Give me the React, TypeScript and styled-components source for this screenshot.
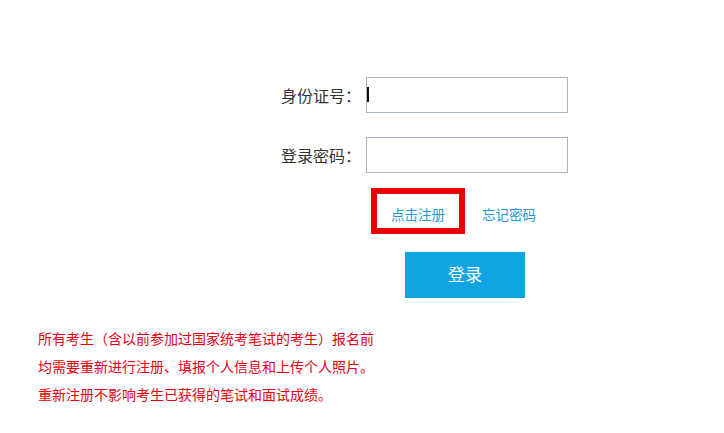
import React from 'react';
import styled, { createGlobalStyle } from 'styled-components';

const GlobalStyle = createGlobalStyle`
  html, body {
    margin: 0;
    padding: 0;
    background: #ffffff;
  }
  body {
    font-family: "Noto Sans CJK SC", "Noto Sans", "Liberation Sans", sans-serif;
  }
`;

const Page = styled.div`
  width: 724px;
  height: 433px;
  padding-top: 77px;
  box-sizing: border-box;
  overflow: hidden;
`;

const Form = styled.form`
  display: flex;
  flex-direction: column;
  margin-left: 260px;
`;

const FieldRow = styled.div<{ $gap: number }>`
  display: flex;
  align-items: center;
  margin-bottom: ${(p) => p.$gap}px;
`;

const Label = styled.label`
  width: 106px;
  box-sizing: border-box;
  padding-right: 5px;
  text-align: right;
  font-size: 16px;
  color: #333333;
  line-height: 20px;
  white-space: nowrap;
`;

const InputWrap = styled.span<{ $caret?: boolean }>`
  position: relative;
  display: inline-flex;

  &::after {
    content: '';
    display: ${(p) => (p.$caret ? 'block' : 'none')};
    position: absolute;
    left: 1px;
    top: 10px;
    width: 2px;
    height: 15px;
    background: #111;
  }
`;

const Input = styled.input`
  width: 202px;
  height: 36px;
  box-sizing: border-box;
  border: 1px solid #a9b6c4;
  padding: 0 0 0 3px;
  font-size: 14px;
  font-family: inherit;
  color: #333;
  caret-color: transparent;
  outline: none;
  background: #fff;
`;

const LinkRow = styled.div`
  display: flex;
  align-items: center;
  margin-left: 111px;
  height: 46px;
`;

const LinkBox = styled.div<{ $marked?: boolean }>`
  display: flex;
  align-items: center;
  justify-content: center;
  box-sizing: border-box;
  height: 46px;
  width: ${(p) => (p.$marked ? '94px' : 'auto')};
  border: ${(p) => (p.$marked ? '6px solid #ee0000' : 'none')};
  margin-right: ${(p) => (p.$marked ? '17px' : '0')};
  padding-top: 5px;
`;

const TextLink = styled.a`
  font-size: 13.5px;
  color: #2299d3;
  text-decoration: none;
  line-height: 20px;
  cursor: pointer;
`;

const SubmitButton = styled.button`
  margin-left: 145px;
  margin-top: 18px;
  width: 120px;
  height: 46px;
  border: none;
  background: #10a4e0;
  color: #ffffff;
  font-size: 17px;
  font-family: inherit;
  cursor: pointer;
  padding: 0 0 3px 0;
`;

const Notes = styled.div`
  margin-top: 26px;
  padding-left: 38px;
`;

const NoteLine = styled.p`
  margin: 0;
  font-size: 14px;
  line-height: 28px;
  color: #e60012;
  white-space: nowrap;
`;

const notes = [
  '所有考生（含以前参加过国家统考笔试的考生）报名前',
  '均需要重新进行注册、填报个人信息和上传个人照片。',
  '重新注册不影响考生已获得的笔试和面试成绩。',
];

const App: React.FC = () => {
  return (
    <Page>
      <GlobalStyle />
      <Form onSubmit={(e) => e.preventDefault()}>
        <FieldRow $gap={24}>
          <Label htmlFor="idcard">身份证号：</Label>
          <InputWrap $caret>
            <Input id="idcard" type="text" />
          </InputWrap>
        </FieldRow>
        <FieldRow $gap={15}>
          <Label htmlFor="pwd">登录密码：</Label>
          <InputWrap>
            <Input id="pwd" type="password" />
          </InputWrap>
        </FieldRow>
        <LinkRow>
          <LinkBox $marked>
            <TextLink>点击注册</TextLink>
          </LinkBox>
          <LinkBox>
            <TextLink>忘记密码</TextLink>
          </LinkBox>
        </LinkRow>
        <SubmitButton type="submit">登录</SubmitButton>
      </Form>
      <Notes>
        {notes.map((n) => (
          <NoteLine key={n}>{n}</NoteLine>
        ))}
      </Notes>
    </Page>
  );
};

export default App;
